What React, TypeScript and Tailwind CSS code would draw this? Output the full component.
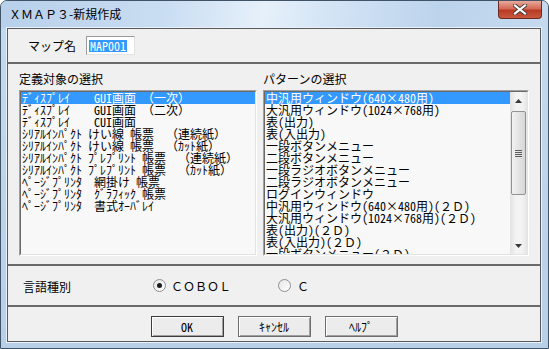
import React from "react"

const leftItems = [
  "ﾃﾞｨｽﾌﾟﾚｲ    GUI画面 （一次）",
  "ﾃﾞｨｽﾌﾟﾚｲ    GUI画面 （二次）",
  "ﾃﾞｨｽﾌﾟﾚｲ    CUI画面",
  "ｼﾘｱﾙｲﾝﾊﾟｸﾄ けい線 帳票  （連続紙）",
  "ｼﾘｱﾙｲﾝﾊﾟｸﾄ けい線 帳票  （ｶｯﾄ紙）",
  "ｼﾘｱﾙｲﾝﾊﾟｸﾄ ﾌﾟﾚﾌﾟﾘﾝﾄ 帳票  （連続紙）",
  "ｼﾘｱﾙｲﾝﾊﾟｸﾄ ﾌﾟﾚﾌﾟﾘﾝﾄ 帳票  （ｶｯﾄ紙）",
  "ﾍﾟｰｼﾞﾌﾟﾘﾝﾀ  網掛け 帳票",
  "ﾍﾟｰｼﾞﾌﾟﾘﾝﾀ  ｸﾞﾗﾌｨｯｸ 帳票",
  "ﾍﾟｰｼﾞﾌﾟﾘﾝﾀ  書式ｵｰﾊﾞﾚｲ",
]

const patterns = [
  "中汎用ウィンドウ(640×480用)",
  "大汎用ウィンドウ(1024×768用)",
  "表(出力)",
  "表(入出力)",
  "一段ボタンメニュー",
  "二段ボタンメニュー",
  "一段ラジオボタンメニュー",
  "二段ラジオボタンメニュー",
  "ログインウィンドウ",
  "中汎用ウィンドウ(640×480用)(２Ｄ)",
  "大汎用ウィンドウ(1024×768用)(２Ｄ)",
  "表(出力)(２Ｄ)",
  "表(入出力)(２Ｄ)",
  "一段ボタンメニュー(２Ｄ)",
]

// sunken 3D frame used by list boxes
function Sunken({ children, className = "" }: { children: React.ReactNode; className?: string }) {
  return (
    <div className={`border border-t-[#a0a0a0] border-l-[#a0a0a0] border-r-white border-b-white ${className}`}>
      <div className="h-full border border-t-[#696969] border-l-[#696969] border-r-[#e3e3e3] border-b-[#e3e3e3] bg-[#f8f8f8] overflow-hidden">
        {children}
      </div>
    </div>
  )
}

function Row({ text, selected }: { text: string; selected?: boolean }) {
  return (
    <div
      className={`h-[12px] leading-[12px] pl-px whitespace-pre ${
        selected ? "bg-[#3399ff] text-white" : "text-black"
      }`}
    >
      {text}
    </div>
  )
}

function Arrow({ down }: { down?: boolean }) {
  return (
    <div className="h-[17px] flex items-center justify-center">
      <svg width="7" height="4" viewBox="0 0 7 4">
        <path d={down ? "M0 0h7L3.5 4z" : "M0 4h7L3.5 0z"} fill="#3a3a3a" />
      </svg>
    </div>
  )
}

function Scrollbar() {
  return (
    <div className="w-[17px] h-full flex flex-col bg-[linear-gradient(90deg,#e2e2e2,#f3f3f3_35%,#f3f3f3_70%,#e6e6e6)]">
      <Arrow />
      <div className="flex-1 px-px pt-[2px]">
        <div className="h-[84px] rounded-[2px] border border-[#929292] bg-[linear-gradient(90deg,#f2f2f2,#e4e4e4_50%,#d6d6d6)] flex flex-col items-center justify-center gap-px">
          <div className="w-[7px] h-px bg-[#5c5c5c]" />
          <div className="w-[7px] h-px bg-[#5c5c5c]" />
          <div className="w-[7px] h-px bg-[#5c5c5c]" />
          <div className="w-[7px] h-px bg-[#5c5c5c]" />
        </div>
      </div>
      <Arrow down />
    </div>
  )
}

function Radio({ checked }: { checked?: boolean }) {
  return (
    <div className="w-[13px] h-[13px] rounded-full border border-[#8f8f8f] bg-[linear-gradient(135deg,#e6e6e6,#ffffff)] flex items-center justify-center">
      {checked && <div className="w-[5px] h-[5px] rounded-full bg-[#1c1c1c]" />}
    </div>
  )
}

function Button({ label, isDefault }: { label: string; isDefault?: boolean }) {
  return (
    <div
      className={`w-[73px] h-[21px] flex items-center justify-center border bg-[#ececec] shadow-[inset_1px_1px_0_#ffffff,inset_-1px_-1px_0_#a0a0a0] ${
        isDefault ? "border-[#3c3c3c]" : "border-[#6e6e6e]"
      }`}
    >
      <span className="text-[12px] leading-[12px]">{label}</span>
    </div>
  )
}

export default function App() {
  const mono = "font-['Noto_Sans_Mono_CJK_JP','Noto_Sans_CJK_JP',monospace] text-[12px]"

  return (
    <div className="w-[549px] h-[349px] flex flex-col rounded-t-[7px] border border-[#415366] bg-[linear-gradient(180deg,#c4daf0,#b8cfe8)] font-['Noto_Sans_CJK_JP',sans-serif] text-black overflow-hidden">
      {/* title bar */}
      <div className="h-[27px] flex items-start justify-between bg-[linear-gradient(100deg,#b8d0ea_0%,#c9ddf2_30%,#e6f0fa_48%,#d3e4f5_60%,#bcd3ec_80%,#c5daef_100%)]">
        <div className="pl-[8px] pt-[6px] text-[12px] leading-[14px]">ＸＭＡＰ３-新規作成</div>
        <div className="w-[44px] h-[18px] mr-[6px] rounded-b-[4px] border border-t-0 border-[#6b2a20] bg-[linear-gradient(180deg,#e8a99c_0%,#d36a55_45%,#b83a25_55%,#c9583f_100%)] flex items-center justify-center">
          <svg width="14" height="11" viewBox="0 0 14 11">
            <path d="M2 1.5l10 8M12 1.5l-10 8" stroke="#4a3a38" strokeWidth="4" strokeLinecap="square" />
            <path d="M2 1.5l10 8M12 1.5l-10 8" stroke="#ffffff" strokeWidth="2.2" strokeLinecap="square" />
          </svg>
        </div>
      </div>

      {/* client area */}
      <div className="flex-1 ml-[6px] mr-[7px] mb-[6px] border border-[#5a5a5a] ring-1 ring-[#e9f2fb] bg-[#f0f0f0] flex flex-col">
        {/* map name */}
        <div className="h-[33px] flex items-center pl-[20px]">
          <span className="text-[12px] leading-[14px]">マップ名</span>
          <div className="ml-[10px] w-[49px] h-[19px] border border-t-[#9a9a9a] border-l-[#9a9a9a] border-r-[#e3e3e3] border-b-[#e3e3e3] bg-white flex items-center pl-[2px]">
            <span className={`${mono} leading-[12px] bg-[#3399ff] text-white px-px`}>MAP001</span>
          </div>
        </div>
        <div className="h-[2px] bg-[#6a6a6a]" />

        {/* selections */}
        <div className="h-[200px] px-[11px] pt-[7px] flex gap-[6px]">
          <div className="w-[238px] flex flex-col">
            <div className="h-[16px] leading-[16px] text-[12px] mb-[3px]">定義対象の選択</div>
            <Sunken className="h-[166px]">
              <div className={mono}>
                {leftItems.map((t, i) => (
                  <Row key={i} text={t} selected={i === 0} />
                ))}
              </div>
            </Sunken>
          </div>
          <div className="flex-1 flex flex-col">
            <div className="h-[16px] leading-[16px] text-[12px] mb-[3px]">パターンの選択</div>
            <Sunken className="h-[166px]">
              <div className="h-full flex">
                <div className={`flex-1 overflow-hidden ${mono}`}>
                  {patterns.map((t, i) => (
                    <Row key={i} text={t} selected={i === 0} />
                  ))}
                </div>
                <Scrollbar />
              </div>
            </Sunken>
          </div>
        </div>
        <div className="h-[2px] bg-[#6a6a6a]" />

        {/* language */}
        <div className="h-[39px] flex items-center pl-[15px]">
          <span className="w-[130px] pt-[3px] text-[12px] leading-[14px]">言語種別</span>
          <div className="w-[125px] flex items-center gap-[5px]">
            <Radio checked />
            <span className="text-[12px] leading-[14px]">ＣＯＢＯＬ</span>
          </div>
          <div className="flex items-center gap-[6px]">
            <Radio />
            <span className="text-[12px] leading-[14px]">Ｃ</span>
          </div>
        </div>
        <div className="h-[2px] bg-[#6a6a6a]" />

        {/* buttons */}
        <div className={`flex-1 pt-[9px] flex justify-center gap-[14px] ${mono}`}>
          <Button label="OK" isDefault />
          <Button label="ｷｬﾝｾﾙ" />
          <Button label="ﾍﾙﾌﾟ" />
        </div>
      </div>
    </div>
  )
}
